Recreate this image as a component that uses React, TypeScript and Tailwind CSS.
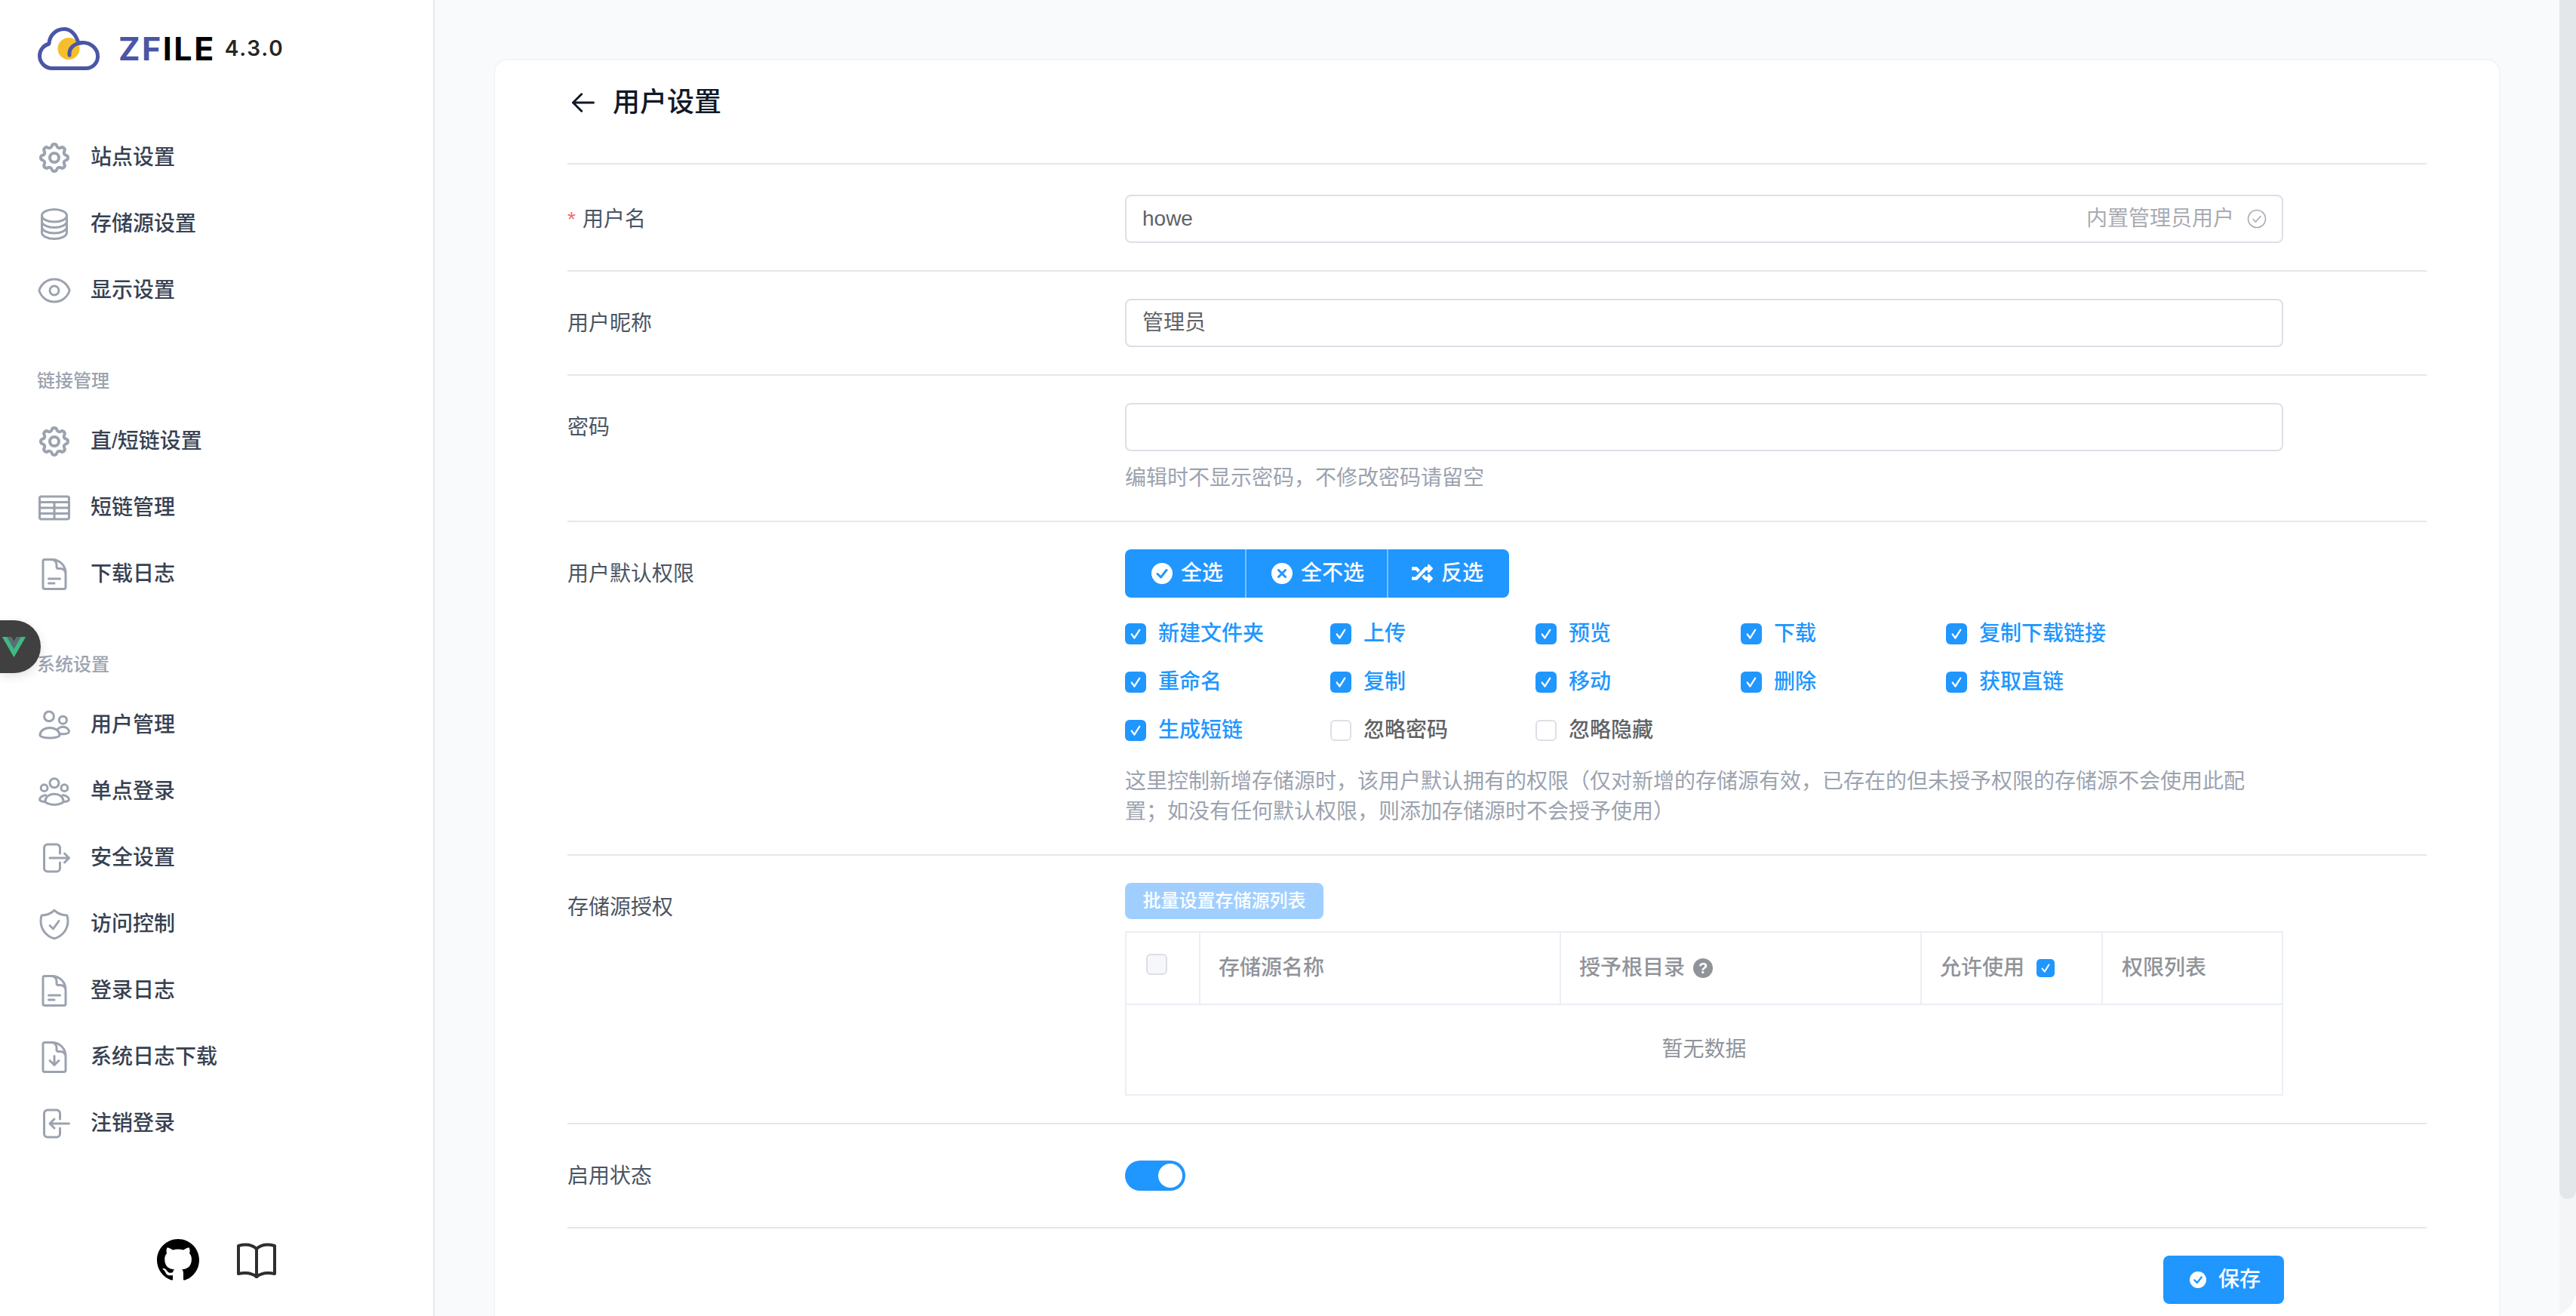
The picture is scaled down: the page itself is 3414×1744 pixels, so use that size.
import React from "react";
import {
  HiOutlineCog,
} from "react-icons/hi";
import {
  HiOutlineCircleStack,
  HiOutlineEye,
  HiOutlineTableCells,
  HiOutlineDocumentText,
  HiOutlineShieldCheck,
  HiOutlineDocumentArrowDown,
  HiOutlineArrowLeft,
} from "react-icons/hi2";
import { FaRandom } from "react-icons/fa";

const ic = "w-12 h-12 text-[#9ca3af] shrink-0";

function Stroke({ children }: { children: React.ReactNode }) {
  return (
    <svg viewBox="0 0 24 24" fill="none" stroke="currentColor" strokeWidth={1.5} strokeLinecap="round" strokeLinejoin="round" className={ic}>
      {children}
    </svg>
  );
}

const IconUsers = () => (
  <Stroke>
    <circle cx="8.5" cy="6.2" r="3.2" />
    <circle cx="17.7" cy="8.6" r="2.5" />
    <path d="M2.5 18.6c0-2.8 2.9-4.9 6.5-4.9s6.5 2.1 6.5 4.9c0 1-2.9 1.9-6.5 1.9s-6.5-.9-6.5-1.9Z" />
    <path d="M14.3 14.6c.8-.9 2.1-1.5 3.5-1.5 2.2 0 3.9 1.5 3.9 3.2 0 .9-1.6 1.5-3.4 1.6-.7 0-1.5 0-2.4-.1" />
  </Stroke>
);
const IconGroup = () => (
  <Stroke>
    <circle cx="12" cy="6.4" r="3" />
    <circle cx="5.3" cy="9.6" r="2.2" />
    <circle cx="18.7" cy="9.6" r="2.2" />
    <path d="M6 18.2c0-2.6 2.7-4.6 6-4.6s6 2 6 4.6c0 1.3-2.7 2.6-6 2.6s-6-1.3-6-2.6Z" />
    <path d="M6.4 14.4c-2.3.1-4.1 1.5-4.1 3 0 .7 1.2 1.3 3.8 1.5" />
    <path d="M17.6 14.4c2.3.1 4.1 1.5 4.1 3 0 .7-1.2 1.3-3.8 1.5" />
  </Stroke>
);
const IconExit = () => (
  <Stroke>
    <path d="M15.75 9V5.25A2.25 2.25 0 0 0 13.5 3h-6a2.25 2.25 0 0 0-2.25 2.25v13.5A2.25 2.25 0 0 0 7.5 21h6a2.25 2.25 0 0 0 2.25-2.25V15m3 0 3-3m0 0-3-3m3 3H9" />
  </Stroke>
);
const IconEnter = () => (
  <Stroke>
    <path d="M15.75 9V5.25A2.25 2.25 0 0 0 13.5 3h-6a2.25 2.25 0 0 0-2.25 2.25v13.5A2.25 2.25 0 0 0 7.5 21h6a2.25 2.25 0 0 0 2.25-2.25V15M12 9l-3 3m0 0 3 3m-3-3h12.75" />
  </Stroke>
);

function NavItem({ icon, label }: { icon: React.ReactNode; label: string }) {
  return (
    <div className="flex h-[88px] items-center gap-6 pl-12 text-[28px] font-medium text-[#374151]">
      {icon}
      <span>{label}</span>
    </div>
  );
}

function NavLabel({ label }: { label: string }) {
  return <div className="mt-[60px] mb-5 pl-[49px] text-[24px] leading-8 font-medium text-[#9ca3af]">{label}</div>;
}

const CheckMark = ({ className }: { className: string }) => (
  <svg viewBox="0 0 24 24" fill="none" stroke="white" strokeWidth={2} strokeLinecap="round" strokeLinejoin="round" className={className}>
    <path d="M7.5 12.5l3.2 4.2 5.8-9.2" />
  </svg>
);

function Check({ label, on }: { label: string; on: boolean }) {
  return (
    <div className="flex h-16 items-center gap-4 text-[28px] font-medium">
      {on ? (
        <span className="flex h-7 w-7 items-center justify-center rounded-[6px] bg-[#2096ff]">
          <CheckMark className="h-7 w-7" />
        </span>
      ) : (
        <span className="h-7 w-7 rounded-[6px] border-2 border-[#dcdfe6] bg-white" />
      )}
      <span className={on ? "text-[#2096ff]" : "text-[#606266]"}>{label}</span>
    </div>
  );
}

function Row({ label, required, first, last, children }: { label: string; required?: boolean; first?: boolean; last?: boolean; children: React.ReactNode }) {
  return (
    <div className={`flex ${first ? "pt-10" : "pt-9"} ${last ? "" : "border-b-2 border-[#e5e7eb]"} pb-9`}>
      <div className="h-16 w-[739px] shrink-0 text-[28px] leading-[66px] text-[#4b5563]">
        {required && <span className="mr-[9px] text-[#f56c6c]">*</span>}
        {label}
      </div>
      <div className="w-[1535px]">{children}</div>
    </div>
  );
}

function Input({ value, children }: { value?: string; children?: React.ReactNode }) {
  return (
    <div className="flex h-16 items-center justify-between rounded-lg border-2 border-[#dcdfe6] pr-5 pl-[21px] text-[28px] text-[#606266]">
      <span>{value}</span>
      {children}
    </div>
  );
}

const FilledCircle = ({ kind, className }: { kind: "check" | "x"; className: string }) => (
  <svg viewBox="0 0 28 28" className={className}>
    <circle cx="14" cy="14" r="14" fill="white" />
    {kind === "check" ? (
      <path d="M8 14.5l4.5 4.5L20 9.5" fill="none" stroke="#2096ff" strokeWidth={3} strokeLinecap="round" strokeLinejoin="round" />
    ) : (
      <path d="M9.5 9.5l9 9m0-9l-9 9" fill="none" stroke="#2096ff" strokeWidth={3} strokeLinecap="round" />
    )}
  </svg>
);

const perms: [string, boolean][] = [
  ["新建文件夹", true], ["上传", true], ["预览", true], ["下载", true], ["复制下载链接", true],
  ["重命名", true], ["复制", true], ["移动", true], ["删除", true], ["获取直链", true],
  ["生成短链", true], ["忽略密码", false], ["忽略隐藏", false],
];

export default function App() {
  return (
    <div className="relative flex h-[1744px] w-[3414px] overflow-hidden rounded-br-[34px] bg-[#f9fafb] [font-family:'Liberation_Sans','Noto_Sans_CJK_SC',sans-serif]">
      {/* Sidebar */}
      <aside className="flex w-[576px] shrink-0 flex-col border-r-2 border-[#e5e7eb] bg-white">
        <div className="flex h-[128px] shrink-0 items-center pl-[50px] [font-family:Inter,sans-serif]">
          <svg viewBox="0 0 82 57" className="h-[57px] w-[82px]" fill="none">
            <circle cx="41" cy="28.5" r="14.5" fill="#f6be2c" />
            <path d="M19 54.5H64a15.5 15.5 0 0 0 15.5-16C79.5 29 71 20.5 60 20.5c-2.2 0-4 .3-6 .8C51 10 44 2.5 35 2.5 24 2.5 15.5 11 15 22 8 24 2.5 30 2.5 38 2.5 47 10 54.5 19 54.5Z" stroke="#4a56a6" strokeWidth={5} strokeLinejoin="round" />
            <path d="M42 37C41 28 48 21 60 20.5" stroke="#4a56a6" strokeWidth={5} strokeLinecap="round" />
          </svg>
          <span className="ml-[25px] text-[43px] leading-none font-bold tracking-[2.5px] text-black">
            <span className="text-[#4a56a6]">ZF</span>ILE
          </span>
          <span className="ml-[12px] text-[28px] leading-none font-semibold tracking-[1.8px] text-[#262626]">4.3.0</span>
        </div>
        <nav className="mt-[37px]">
          <NavItem icon={<HiOutlineCog className={ic} />} label="站点设置" />
          <NavItem icon={<HiOutlineCircleStack className={ic} />} label="存储源设置" />
          <NavItem icon={<HiOutlineEye className={ic} />} label="显示设置" />
          <NavLabel label="链接管理" />
          <NavItem icon={<HiOutlineCog className={ic} />} label="直/短链设置" />
          <NavItem icon={<HiOutlineTableCells className={ic} />} label="短链管理" />
          <NavItem icon={<HiOutlineDocumentText className={ic} />} label="下载日志" />
          <NavLabel label="系统设置" />
          <NavItem icon={<IconUsers />} label="用户管理" />
          <NavItem icon={<IconGroup />} label="单点登录" />
          <NavItem icon={<IconExit />} label="安全设置" />
          <NavItem icon={<HiOutlineShieldCheck className={ic} />} label="访问控制" />
          <NavItem icon={<HiOutlineDocumentText className={ic} />} label="登录日志" />
          <NavItem icon={<HiOutlineDocumentArrowDown className={ic} />} label="系统日志下载" />
          <NavItem icon={<IconEnter />} label="注销登录" />
        </nav>
        <div className="mt-auto mb-[46px] flex items-center justify-center gap-[50px]">
          <svg viewBox="0 0 16 16" className="h-14 w-14" fill="#000">
            <path d="M8 0C3.58 0 0 3.58 0 8c0 3.54 2.29 6.53 5.47 7.59.4.07.55-.17.55-.38 0-.19-.01-.82-.01-1.49-2.01.37-2.53-.49-2.69-.94-.09-.23-.48-.94-.82-1.13-.28-.15-.68-.52-.01-.53.63-.01 1.08.58 1.23.82.72 1.21 1.87.87 2.33.66.07-.52.28-.87.51-1.07-1.78-.2-3.64-.89-3.64-3.95 0-.87.31-1.59.82-2.15-.08-.2-.36-1.02.08-2.12 0 0 .67-.21 2.2.82.64-.18 1.32-.27 2-.27.68 0 1.36.09 2 .27 1.53-1.04 2.2-.82 2.2-.82.44 1.1.16 1.92.08 2.12.51.56.82 1.27.82 2.15 0 3.07-1.87 3.75-3.65 3.95.29.25.54.73.54 1.48 0 1.07-.01 1.93-.01 2.2 0 .21.15.46.55.38A8.013 8.013 0 0016 8c0-4.42-3.58-8-8-8z" />
          </svg>
          <svg viewBox="0 0 52 48" className="h-12 w-[52px]" fill="none" stroke="#2e2e2e" strokeWidth={4} strokeLinejoin="round" strokeLinecap="round">
            <path d="M2 5c9-2.5 18-1.5 24 4 6-5.5 15-6.5 24-4v37c-9-2-18-1-24 4-6-5-15-6-24-4Z" />
            <path d="M26 9v37" />
          </svg>
        </div>
      </aside>

      {/* Main */}
      <main className="min-w-0 flex-1 pt-20 pr-[102px] pl-20">
        <div className="rounded-2xl bg-white px-24 pt-7 shadow-[0_0_4px_rgba(0,0,0,0.07)]">
          <div className="flex h-[110px] items-start gap-[21px] border-b-2 border-[#e5e7eb] pl-[3px]">
            <HiOutlineArrowLeft className="mt-[10px] h-9 w-9 text-[#111827]" style={{ strokeWidth: 2 }} />
            <span className="text-[36px] leading-[56px] font-medium text-[#111827]">用户设置</span>
          </div>

          <Row label="用户名" required first>
            <Input value="howe">
              <span className="flex items-center gap-[17px] text-[#a8abb2]">
                内置管理员用户
                <svg viewBox="0 0 26 26" fill="none" stroke="#a8abb2" strokeWidth={1.6} strokeLinecap="round" strokeLinejoin="round" className="h-[26px] w-[26px]">
                  <circle cx="13" cy="13" r="11.5" />
                  <path d="M8 13.5l3.6 3.6L18 9.5" />
                </svg>
              </span>
            </Input>
          </Row>

          <Row label="用户昵称">
            <Input value="管理员" />
          </Row>

          <Row label="密码">
            <Input />
            <div className="mt-4 text-[28px] leading-10 text-[#9ca3af]">编辑时不显示密码，不修改密码请留空</div>
          </Row>

          <Row label="用户默认权限">
            <div className="flex h-16 w-[509px] items-stretch overflow-hidden rounded-lg bg-[#2096ff] text-[28px] font-medium text-white">
              <div className="flex w-[161px] items-center gap-[11px] border-r-2 border-[#79bfff] pl-[35px]">
                <FilledCircle kind="check" className="h-7 w-7" />
                全选
              </div>
              <div className="flex w-[188px] items-center gap-[11px] border-r-2 border-[#79bfff] pl-[33px]">
                <FilledCircle kind="x" className="h-7 w-7" />
                全不选
              </div>
              <div className="flex flex-1 items-center gap-[11px] pl-[31px]">
                <FaRandom className="h-7 w-7" />
                反选
              </div>
            </div>
            <div className="mt-4 grid grid-cols-[repeat(5,272px)]">
              {perms.map(([l, on]) => (
                <Check key={l} label={l} on={on} />
              ))}
            </div>
            <div className="mt-4 text-[28px] leading-10 text-[#9ca3af]">
              这里控制新增存储源时，该用户默认拥有的权限（仅对新增的存储源有效，已存在的但未授予权限的存储源不会使用此配置；如没有任何默认权限，则添加存储源时不会授予使用）
            </div>
          </Row>

          <Row label="存储源授权">
            <div className="flex h-12 w-[263px] items-center justify-center rounded-lg bg-[#a0cfff] text-[24px] font-medium text-white">批量设置存储源列表</div>
            <div className="mt-4 border-2 border-[#ebeef5] text-[28px] text-[#909399]">
              <div className="grid h-[96px] grid-cols-[98px_478px_478px_240px_1fr] border-b-2 border-[#ebeef5] font-medium">
                <div className="flex items-center border-r-2 border-[#ebeef5] pb-[10px] pl-[26px]">
                  <span className="h-7 w-7 rounded-[6px] border-2 border-[#dcdfe6] bg-[#f5f7fa]" />
                </div>
                <div className="flex items-center border-r-2 border-[#ebeef5] pl-6">存储源名称</div>
                <div className="flex items-center gap-[11px] border-r-2 border-[#ebeef5] pl-6">
                  授予根目录
                  <span className="flex h-[26px] w-[26px] items-center justify-center rounded-full bg-[#909399] text-[20px] leading-none font-bold text-white">?</span>
                </div>
                <div className="flex items-center gap-4 border-r-2 border-[#ebeef5] pl-6">
                  允许使用
                  <span className="flex h-6 w-6 items-center justify-center rounded-[5px] bg-[#2096ff]">
                    <CheckMark className="h-6 w-6" />
                  </span>
                </div>
                <div className="flex items-center pl-[25px]">权限列表</div>
              </div>
              <div className="flex h-[118px] items-center justify-center">暂无数据</div>
            </div>
          </Row>

          <Row label="启用状态" last>
            <div className="flex h-16 items-center">
              <span className="flex h-10 w-20 items-center justify-end rounded-full bg-[#2096ff] pr-1">
                <span className="h-8 w-8 rounded-full bg-white" />
              </span>
            </div>
          </Row>

          <div className="border-t-2 border-[#e5e7eb] pt-9 pb-9">
            <div className="flex h-16 w-[2275px] justify-end">
              <div className="flex h-16 w-40 items-center gap-4 rounded-lg bg-[#2096ff] pl-[35px] text-[28px] font-medium text-white">
                <FilledCircle kind="check" className="h-[22px] w-[22px]" />
                保存
              </div>
            </div>
          </div>
        </div>
      </main>

      {/* Scrollbar */}
      <div className="absolute top-0 right-0 h-full w-[22px] bg-[#f4f5f7]">
        <div className="h-[1589px] rounded-b-[11px] bg-[#e3e7ea]" />
      </div>

      {/* Vue devtools pill */}
      <div className="absolute top-[822px] left-0 flex h-[70px] w-[54px] items-center rounded-r-[35px] bg-[#404040] pl-[3px] shadow-[0_4px_14px_rgba(0,0,0,0.12)]">
        <svg viewBox="0 0 256 221" className="h-[27px] w-[31px]">
          <path d="M204.8 0H256L128 220.8 0 0h97.92L128 51.2 157.44 0h47.36Z" fill="#41b883" />
          <path d="M0 0l128 220.8L256 0h-51.2L128 132.48 50.56 0H0Z" fill="#41b883" />
          <path d="M50.56 0L128 133.12 204.8 0h-47.36L128 51.2 97.92 0H50.56Z" fill="#5a6b78" />
        </svg>
      </div>
    </div>
  );
}
